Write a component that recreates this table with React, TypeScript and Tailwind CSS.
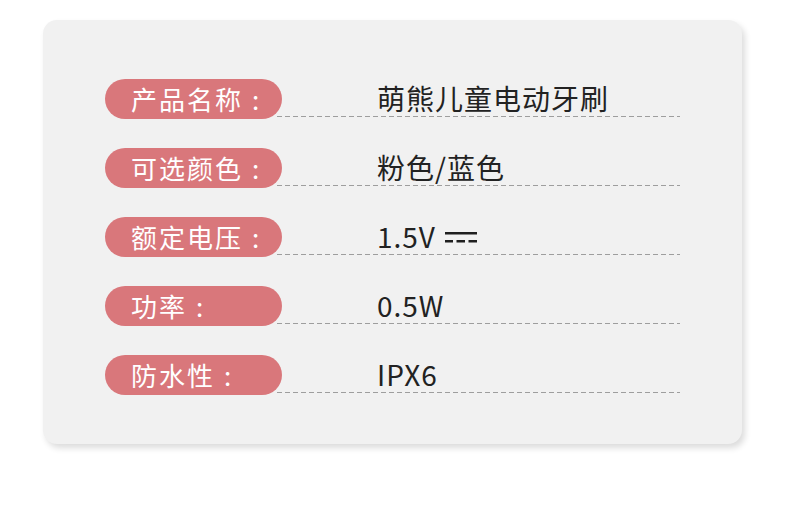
const specs = [
  { label: '产品名称', value: '萌熊儿童电动牙刷' },
  { label: '可选颜色', value: '粉色/蓝色' },
  { label: '额定电压', value: '1.5V', dc: true },
  { label: '功率', value: '0.5W' },
  { label: '防水性', value: 'IPX6' },
];

function DcSymbol() {
  return (
    <svg width="32" height="14" viewBox="0 0 32 14" className="ml-[9px] mt-[2px]">
      <rect x="0" y="2" width="32" height="2.5" fill="#1f1f1f" />
      <rect x="0" y="10" width="8" height="2.5" fill="#1f1f1f" />
      <rect x="11.5" y="10" width="8.5" height="2.5" fill="#1f1f1f" />
      <rect x="23.5" y="10" width="8.5" height="2.5" fill="#1f1f1f" />
    </svg>
  );
}

export default function App() {
  return (
    <div className="h-[515px] w-[790px] bg-white pl-[43px] pt-[20px] font-['Noto_Sans_CJK_SC',sans-serif]">
      <div className="flex h-[424px] w-[699px] flex-col gap-[29px] rounded-[14px] bg-[#f1f1f1] pl-[62px] pt-[59px] shadow-[3px_4px_6px_rgba(0,0,0,0.14)]">
        {specs.map((spec) => (
          <div key={spec.label} className="flex items-end">
            <div className="relative z-10 flex h-[40px] w-[177px] items-center rounded-full bg-[#d9777b] pl-[26px] text-[26px] leading-none tracking-[2px] text-white">
              {spec.label}
              <span className="ml-[9px]">:</span>
            </div>
            <div className="-ml-[5px] mb-[2px] w-[403px]">
              <div className="flex h-[37px] items-center pl-[100px] text-[28px] leading-none tracking-[1px] text-[#222]">
                {spec.value}
                {spec.dc && <DcSymbol />}
              </div>
              <div className="h-px bg-[repeating-linear-gradient(to_right,#9e9e9e_0_5px,transparent_5px_8px)]" />
            </div>
          </div>
        ))}
      </div>
    </div>
  );
}
